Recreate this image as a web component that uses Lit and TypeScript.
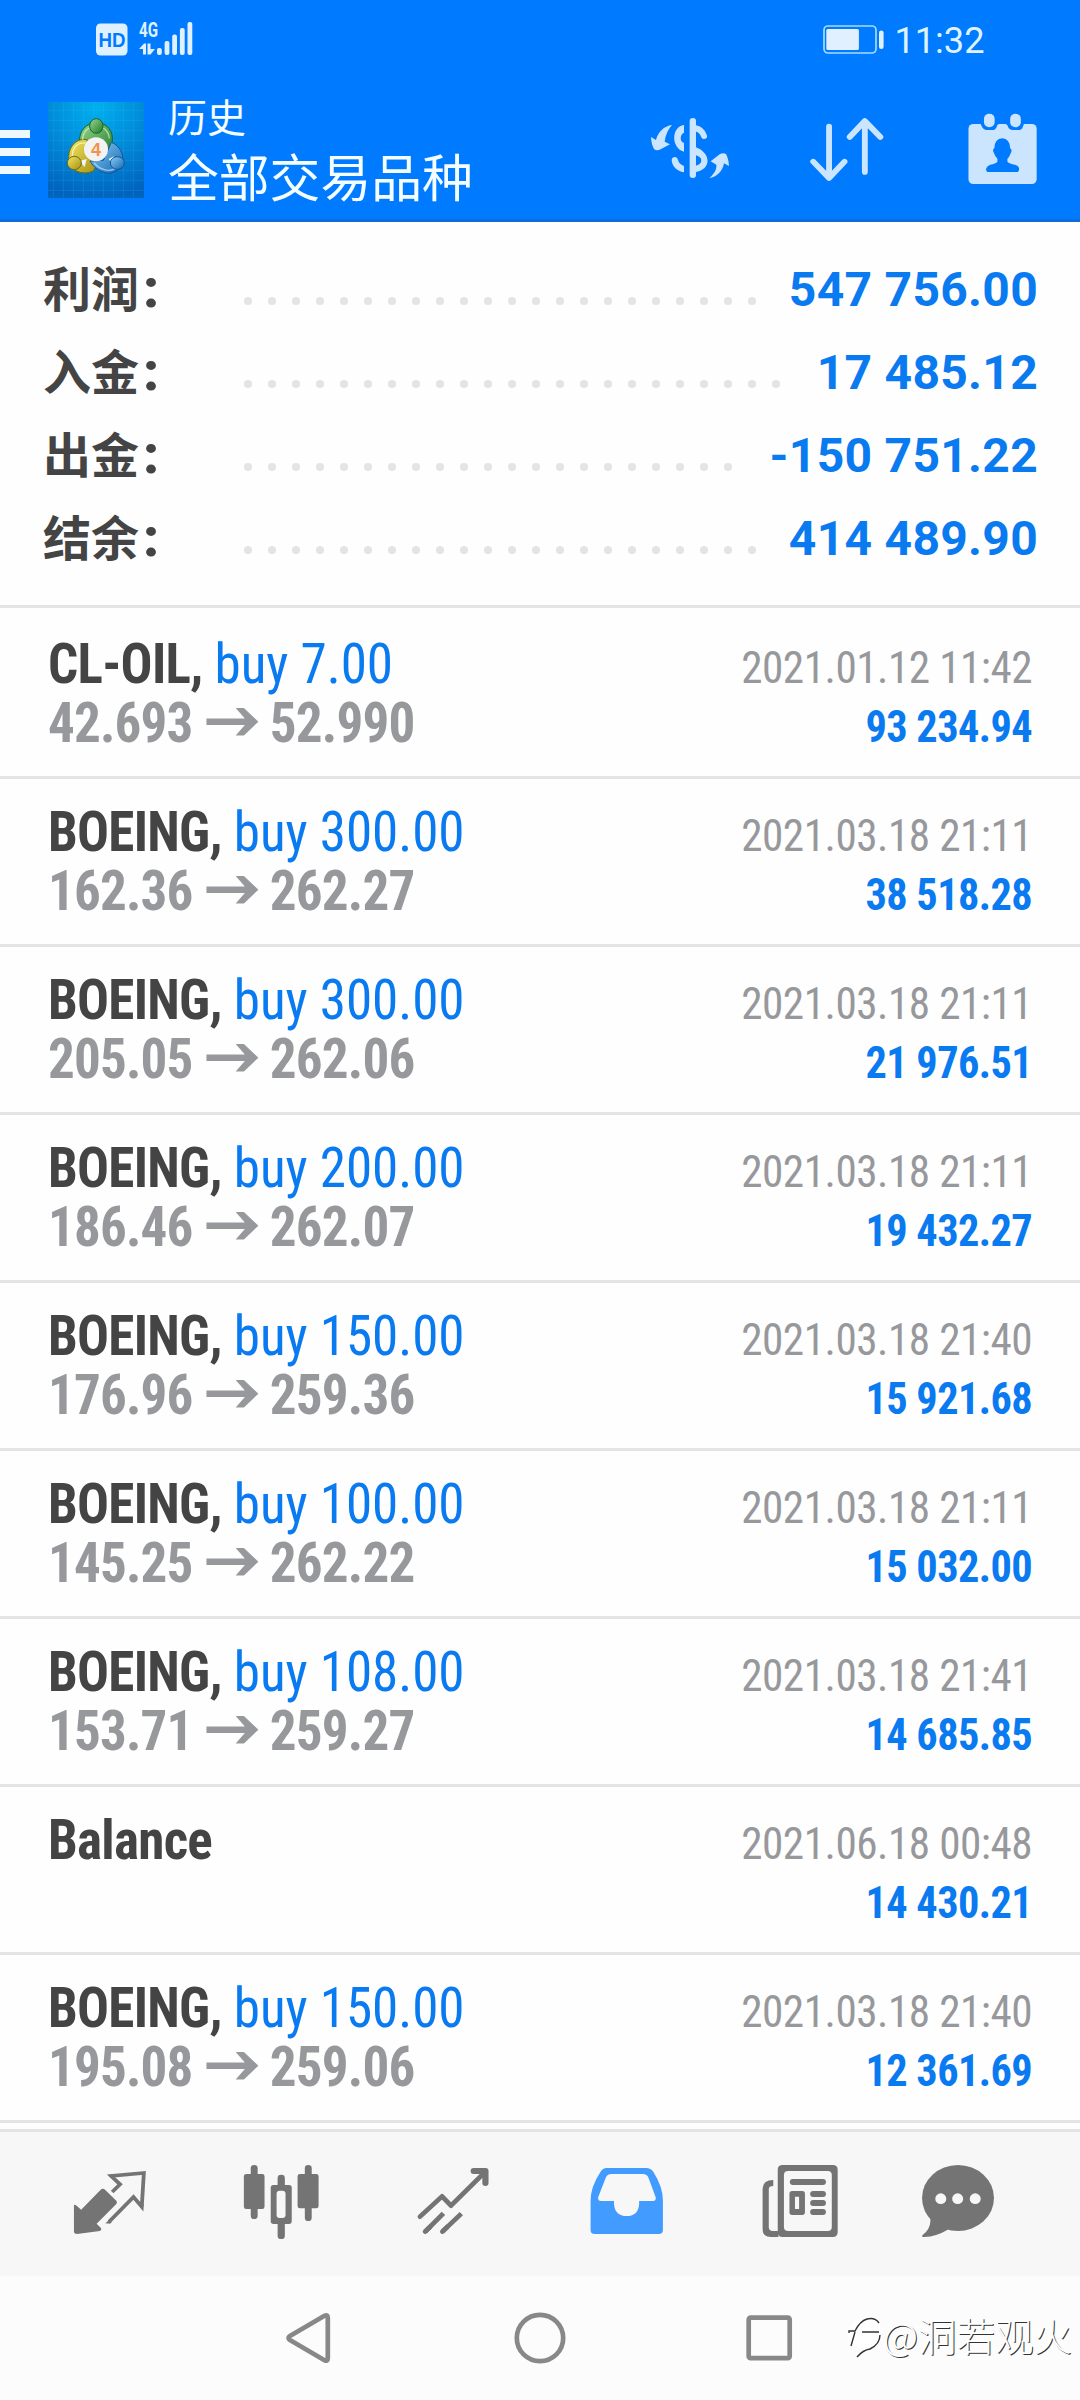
import { LitElement, html, css, svg, nothing } from "lit";
import { customElement, property } from "lit/decorators.js";

interface Deal {
  symbol: string;
  volume?: string;
  open?: string;
  close?: string;
  time: string;
  profit: string;
}

const SUMMARY: [string, string][] = [
  ["利润", "547 756.00"],
  ["入金", "17 485.12"],
  ["出金", "-150 751.22"],
  ["结余", "414 489.90"],
];

const DEALS: Deal[] = [
  { symbol: "CL-OIL", volume: "7.00", open: "42.693", close: "52.990", time: "2021.01.12 11:42", profit: "93 234.94" },
  { symbol: "BOEING", volume: "300.00", open: "162.36", close: "262.27", time: "2021.03.18 21:11", profit: "38 518.28" },
  { symbol: "BOEING", volume: "300.00", open: "205.05", close: "262.06", time: "2021.03.18 21:11", profit: "21 976.51" },
  { symbol: "BOEING", volume: "200.00", open: "186.46", close: "262.07", time: "2021.03.18 21:11", profit: "19 432.27" },
  { symbol: "BOEING", volume: "150.00", open: "176.96", close: "259.36", time: "2021.03.18 21:40", profit: "15 921.68" },
  { symbol: "BOEING", volume: "100.00", open: "145.25", close: "262.22", time: "2021.03.18 21:11", profit: "15 032.00" },
  { symbol: "BOEING", volume: "108.00", open: "153.71", close: "259.27", time: "2021.03.18 21:41", profit: "14 685.85" },
  { symbol: "Balance", time: "2021.06.18 00:48", profit: "14 430.21" },
  { symbol: "BOEING", volume: "150.00", open: "195.08", close: "259.06", time: "2021.03.18 21:40", profit: "12 361.69" },
];

@customElement("status-bar")
class StatusBar extends LitElement {
  static styles = css`
    :host { display: flex; align-items: flex-start; height: 81px; padding: 0 95.5px 0 96px; box-sizing: border-box; justify-content: space-between; color: #dff3ff; font-family: Roboto, sans-serif; }
    .left, .right { display: flex; }
    .signal { display: block; }
    .time { font-size: 36.2px; line-height: 42px; margin-top: 20px; margin-left: 9.5px; }
    .mark { font: 700 20px "Liberation Sans", sans-serif; fill: #007aff; }
    .net { font: 700 20px Roboto, sans-serif; fill: #dff3ff; }
  `;
  render() {
    return html`
      <div class="left">
        <svg class="signal" width="100" height="81" viewBox="96 0 100 81" fill="#dff0ff">
          <rect x="96" y="23.5" width="31.5" height="32" rx="4.5" />
          <text class="mark" x="98.5" y="46.5" textLength="27" lengthAdjust="spacingAndGlyphs">HD</text>
          <text class="net" x="139" y="36.5" textLength="19" lengthAdjust="spacingAndGlyphs">4G</text>
          <path d="M139 49 L144 43.5 H146 V54.5 H143 V49Z M147.5 43.5 H150.5 V49 H155 L150.5 54.5 H147.5Z" />
          <rect x="157" y="48" width="4.8" height="7" rx="2" />
          <rect x="164.6" y="41" width="4.8" height="14" rx="2" />
          <rect x="172.2" y="34.5" width="4.8" height="20.5" rx="2" />
          <rect x="179.9" y="28" width="4.8" height="27" rx="2" />
          <rect x="187.5" y="22" width="4.8" height="33" rx="2" />
        </svg>
      </div>
      <div class="right">
        <svg class="signal" width="62" height="81" viewBox="824 0 62 81" fill="#e0f0ff">
          <rect x="825" y="26" width="52" height="27" rx="4" fill="none" stroke="#a5dcff" stroke-width="1.7" />
          <rect x="827.3" y="29" width="32.6" height="21" rx="1.5" />
          <rect x="880" y="30.5" width="4.6" height="18.5" rx="2.3" />
        </svg>
        <span class="time">11:32</span>
      </div>
    `;
  }
}

@customElement("tool-bar")
class ToolBar extends LitElement {
  static styles = css`
    :host { display: flex; align-items: center; height: 138px; padding-right: 39px; }
    svg { display: block; flex: none; }
    .logo { margin-left: 18px; margin-right: 24px; }
    .titles { flex: 1; color: #f4fdff; font-family: "Noto Sans CJK SC", sans-serif; margin-top: -5px; }
    .sub { font-size: 39px; line-height: 54px; }
    .main { font-size: 50.8px; line-height: 66px; }
    .actions { display: flex; align-items: center; gap: 75px; }
    .four { font: 700 54px "Liberation Sans", sans-serif; fill: #f0944a; }
  `;
  render() {
    const grid = [48, 78, 108, 138, 168, 198, 228, 258, 288];
    return html`
      <svg width="30" height="48" viewBox="0 0 30 48" fill="#f0f8ff">
        <path d="M0 4h30v8H0z M0 22h30v8H0z M0 40h30v8H0z" />
      </svg>
      <svg class="logo" width="96" height="96" viewBox="24 21 288 288">
        <defs>
          <radialGradient id="sky" cx="50%" cy="5%" r="95%">
            <stop offset="0" stop-color="#00b0ee" />
            <stop offset=".45" stop-color="#0090dc" />
            <stop offset="1" stop-color="#0064be" />
          </radialGradient>
          <linearGradient id="green" x1="0" y1="0" x2="1" y2="1"><stop offset="0" stop-color="#9ad890" /><stop offset="1" stop-color="#1d7a28" /></linearGradient>
          <linearGradient id="gold" x1="0" y1="0" x2="1" y2="1"><stop offset="0" stop-color="#f2e765" /><stop offset="1" stop-color="#a58f10" /></linearGradient>
          <linearGradient id="blue" x1="0" y1="0" x2="1" y2="1"><stop offset="0" stop-color="#8ccdf5" /><stop offset="1" stop-color="#1267b4" /></linearGradient>
        </defs>
        <rect x="24" y="21" width="288" height="288" fill="url(#sky)" />
        ${grid.map((g) => svg`<path d="M${g - 8} 21V309M24 ${g - 2}H312" stroke="#5fc0f0" stroke-opacity=".22" stroke-width="2" />`)}
        <g stroke-width="3" stroke-linejoin="round">
          <path d="M119 138 C117 108 138 84 169 83 C204 84 220 110 217 140 Q212 168 190 190 L168 140Z" fill="url(#green)" stroke="#17632a" />
          <path d="M142 134 C110 128 88 152 86 184 Q84 216 108 228 Q136 240 160 228 L176 200 L140 178Z" fill="url(#gold)" stroke="#736811" />
          <path d="M214 142 C240 152 252 178 249 206 Q238 232 206 235 C178 232 160 216 150 198 L190 196Z" fill="url(#blue)" stroke="#12549a" />
        </g>
        <path d="M128 134 C128 108 148 94 169 94 C190 94 206 108 208 130" fill="none" stroke="#d5f3cf" stroke-opacity=".7" stroke-width="4" />
        <path d="M136 144 C112 142 98 158 97 182" fill="none" stroke="#fffbc0" stroke-opacity=".8" stroke-width="4" />
        <path d="M162 204 Q182 226 208 226 Q226 224 236 214" fill="none" stroke="#c0e6ff" stroke-opacity=".7" stroke-width="4" />
        <path d="M118 198 L140 192 L134 216Z M206 192 L222 184 L216 206Z" fill="#f0f6f0" />
        <ellipse cx="169" cy="93" rx="20" ry="22" fill="url(#green)" stroke="#17632a" stroke-width="3" />
        <ellipse cx="103" cy="204" rx="21" ry="20" fill="url(#gold)" stroke="#736811" stroke-width="3" />
        <ellipse cx="232" cy="204" rx="21" ry="19" fill="url(#blue)" stroke="#12549a" stroke-width="3" />
        <circle cx="168" cy="163" r="36" fill="#f3f3f3" />
        <text class="four" x="168" y="183" text-anchor="middle">4</text>
      </svg>
      <div class="titles">
        <div class="sub">历史</div>
        <div class="main">全部交易品种</div>
      </div>
      <div class="actions">
        <svg width="82" height="70" viewBox="27 15 246 210" fill="#cbe5ff">
          <path d="M96 45 C72 48 54 66 48 90 L33 81 Q34 103 42 117 Q50 124 62 118 L90 103 L74 95 Q78 64 96 45Z" />
          <path d="M132 45 C93 50 93 115 132 125 V99 C119 95 119 73 132 68Z" />
          <path d="M95 150 C96 138 112 138 114 150 C116 160 124 165 132 168 V187 C110 183 96 168 95 150Z" />
          <rect x="149" y="24" width="19" height="180" rx="9" />
          <path d="M164 54 Q186 58 192 78" fill="none" stroke="#cbe5ff" stroke-width="18" stroke-linecap="round" />
          <path d="M166 111 C214 128 216 178 166 187 V167 C190 163 190 140 166 135Z" />
          <path d="M208 204 C226 188 230 176 229 164 L212 154 L240 132 Q250 127 258 132 Q266 146 267 168 L252 160 C248 184 230 202 208 204Z" />
        </svg>
        <svg width="82.6" height="70" viewBox="770 345 240 210" preserveAspectRatio="none" fill="none" stroke="#cbe5ff" stroke-width="17" stroke-linecap="round" stroke-linejoin="round">
          <path d="M837 380V533M791 485L837 534L882 485M941 516V364M897 411L941 363L986 411" />
        </svg>
        <svg width="77.5" height="80" viewBox="1230 330 225 240" preserveAspectRatio="none" fill="#cbe5ff">
          <rect x="1243" y="372" width="198" height="180" rx="14" />
          <path d="M1276 368 Q1280 374 1281 378 Q1286 390 1296 390 H1312 Q1322 390 1325 380 Q1326 373 1332 372 V360 H1276Z M1350 372 Q1356 373 1357 378 Q1360 390 1372 390 H1388 Q1398 390 1401 380 Q1402 373 1408 368 V360 H1350Z" fill="#007aff" />
          <rect x="1288" y="341" width="31" height="41" rx="15" />
          <rect x="1364" y="341" width="31" height="41" rx="15" />
          <path d="M1341 415 Q1363 416 1364 445 Q1371 449 1366 459 Q1361 473 1356 476 V485 Q1362 491 1378 494 Q1390 498 1390 506 Q1390 516 1383 516 H1301 Q1294 516 1294 506 Q1296 498 1306 494 Q1322 491 1327 485 V476 Q1320 470 1317 459 Q1311 449 1318 445 Q1319 416 1341 415Z" fill="#007aff" />
        </svg>
      </div>
    `;
  }
}

@customElement("summary-panel")
class SummaryPanel extends LitElement {
  static styles = css`
    :host { display: block; padding: 25px 42px 26px 43px; border-bottom: 3px solid #e4e4e4; font-family: Roboto, "Noto Sans CJK SC", sans-serif; font-weight: 700; font-size: 48px; }
    .row { display: flex; height: 83px; align-items: center; line-height: 83px; }
    .label { width: 193px; height: 83px; margin-top: -4px; color: #444; flex: none; font-family: "Noto Sans CJK SC", sans-serif; }
    .colon { font: 900 54px/1 Roboto, sans-serif; margin-left: 4px; }
    .leader { flex: 1; display: flex; flex-wrap: wrap; overflow: hidden; height: 8px; margin-top: 24px; min-width: 0; }
    .dot { width: 8px; height: 8px; margin: 0 8px 8px; border-radius: 50%; background: #e4e4e4; }
    .value { color: #0a7af0; margin-left: 18px; margin-top: 2px; white-space: pre; letter-spacing: .3px; }
  `;
  render() {
    return SUMMARY.map(
      ([label, value]) => html`<div class="row">
        <span class="label">${label}<span class="colon">:</span></span>
        <span class="leader">${Array.from({ length: 26 }, () => html`<i class="dot"></i>`)}</span>
        <span class="value">${value}</span>
      </div>`
    );
  }
}

@customElement("deal-row")
class DealRow extends LitElement {
  @property({ attribute: false }) deal!: Deal;
  static styles = css`
    :host { display: flex; justify-content: space-between; height: 168px; box-sizing: border-box; padding: 23.5px 48px 0 48px; border-bottom: 3px solid #e4e4e4; font-family: "Roboto Condensed", Roboto, sans-serif; font-stretch: 75%; }
    span { white-space: pre; }
    .line { height: 59px; line-height: 59px; display: flex; align-items: baseline; white-space: pre; }
    .left .line { transform: scaleX(.965); transform-origin: 0 50%; }
    .right { padding-top: 3px; }
    .right .line { justify-content: flex-end; transform-origin: 100% 50%; }
    .title { font-size: 55px; }
    .symbol { color: #444; font-weight: 700; letter-spacing: -.75px; }
    .volume, .profit { color: #0a7af0; }
    .volume { letter-spacing: -.05px; }
    .prices { font-size: 55px; font-weight: 700; color: #97989c; letter-spacing: -.85px; }
    .arrow { display: block; margin: 0 12px 0 14px; }
    .when { transform: scaleX(.96); }
    .gain { transform: scaleX(.94); }
    .time { font-size: 45px; color: #97989c; letter-spacing: -.5px; }
    .profit { font-size: 45px; font-weight: 700; letter-spacing: -.6px; }
  `;
  render() {
    const d = this.deal;
    return html`
      <div class="left">
        <div class="line title"><span class="symbol">${d.symbol}${d.volume ? "," : ""}</span>${d.volume ? html`<span class="volume"> buy ${d.volume}</span>` : nothing}</div>
        ${d.open
          ? html`<div class="line prices"><span>${d.open}</span><svg class="arrow" width="54" height="34" viewBox="0 0 54 34" fill="#97989c"><path d="M0 10.5H40L30.5 0H39L54 13.7L39 27.4H30.5L40 17H0Z" /></svg><span>${d.close}</span></div>`
          : nothing}
      </div>
      <div class="right">
        <div class="line when"><span class="time">${d.time}</span></div>
        <div class="line gain"><span class="profit">${d.profit}</span></div>
      </div>
    `;
  }
}

@customElement("tab-bar")
class TabBar extends LitElement {
  static styles = css`
    :host { display: flex; height: 147px; box-sizing: border-box; padding-left: 24.1px; background: #f7f7f7; border-top: 3px solid #e4e4e4; }
    .tab { display: block; flex: none; width: 172.19px; height: 144px; fill: #747474; }
    .line { fill: none; stroke: #747474; }
    .active { fill: #429cff; }
  `;
  render() {
    return html`
      <svg class="tab" viewBox="70 126 500 432" preserveAspectRatio="none">
        <path d="M215 346 Q217 343 221 346 L236 359 L292 300 Q299 293 306 300 L338 332 Q342 337 338 342 L281 401 L294 415 Q296 421 290 423 L224 432 Q215 432 215 424Z" />
        <path class="line" stroke-width="11" d="M326 306 L349 283 L323 258 L418 249 L412 350 L388 321 L317 395" stroke-linejoin="miter" />
        <path d="M318 254 Q317 264 326 264 V253Z M405 342 L406 348 Q411 355 417 350 V342Z M306 400 L315 392 L325 396 L320 401Z" />
      </svg>
      <svg class="tab" viewBox="570 126 500 432" preserveAspectRatio="none">
        <rect x="709" y="252" width="60" height="105" rx="7" /><rect x="729" y="225" width="20" height="162" rx="10" />
        <rect x="865" y="252" width="61" height="103" rx="7" /><rect x="886" y="225" width="20" height="168" rx="10" />
        <rect x="807" y="254" width="21" height="40" rx="10" /><rect x="807" y="395" width="21" height="52" rx="10" />
        <path fill-rule="evenodd" d="M795 285H840Q848 285 848 293V394Q848 402 840 402H795Q787 402 787 394V293Q787 285 795 285Z M813 302Q804 302 804 311V375Q804 384 813 384H821Q830 384 830 375V311Q830 302 821 302Z" />
      </svg>
      <svg class="tab" viewBox="1070 126 500 432" preserveAspectRatio="none">
        <path class="line" stroke-width="14" stroke-linecap="round" stroke-linejoin="round" d="M1221 380L1285 319L1311 347L1408 248M1236 425L1250 411M1286 425L1300 411" />
        <path class="line" stroke-width="14" d="M1236 425L1289 370M1286 425L1341 371" />
        <path class="line" stroke-width="18" stroke-linecap="round" stroke-linejoin="round" d="M1377 243H1411V279" />
      </svg>
      <svg class="tab active" viewBox="2 126 500 432" preserveAspectRatio="none">
        <path fill-rule="evenodd" d="M175 245 Q182 234 192 234 H308 Q320 234 328 245 Q356 290 356 332 V420 Q356 432 344 432 H158 Q146 432 146 420 V332 Q146 290 175 245Z M206 252 Q195 252 190 263 L168 322 Q166 333 177 333 H214 V341 Q216 378 251 378 Q285 378 287 341 V333 H327 Q337 333 335 322 L314 263 Q310 252 298 252Z" />
      </svg>
      <svg class="tab" viewBox="502 126 500 432" preserveAspectRatio="none">
        <path fill-rule="evenodd" d="M704 225H850Q864 225 864 239V427Q864 441 850 441H704Q690 441 690 427V239Q690 225 704 225Z M720 243Q708 243 708 255V411Q708 423 720 423H835Q847 423 847 411V255Q847 243 835 243Z" />
        <path d="M677 270V288Q664 288 664 297V412Q664 423 676 423H692V441H670Q646 441 646 417V298Q646 270 677 270Z" />
        <rect x="725" y="267" width="105" height="18" rx="9" />
        <path fill-rule="evenodd" d="M732 303H761Q769 303 769 311V367Q769 375 761 375H732Q724 375 724 367V311Q724 303 732 303Z M740 320V357H752V320Z" />
        <rect x="784" y="303" width="46" height="18" rx="9" /><rect x="784" y="330" width="46" height="18" rx="9" /><rect x="784" y="357" width="46" height="18" rx="9" />
      </svg>
      <svg class="tab" viewBox="1002 126 500 432" preserveAspectRatio="none">
        <ellipse cx="1214" cy="324" rx="104.5" ry="99" />
        <path d="M1118 364Q1136 385 1134 392Q1133 418 1112 434Q1106 441 1116 441Q1152 439 1184 419L1200 400Z" />
        <g fill="#f7f7f7"><circle cx="1164" cy="326" r="16" /><circle cx="1213" cy="326" r="16" /><circle cx="1264" cy="326" r="16" /></g>
      </svg>
    `;
  }
}

@customElement("system-nav")
class SystemNav extends LitElement {
  static styles = css`
    :host { display: flex; justify-content: center; position: relative; height: 124px; background: #fcfcfc; }
    .key { display: block; fill: none; stroke: #888; stroke-width: 4.7; stroke-linejoin: round; }
    .mark { position: absolute; right: 8px; top: 34px; display: flex; align-items: center; color: #fff; font: 300 38.5px/56px "Noto Sans CJK SC", sans-serif; text-shadow: 1px 1px 0 #333; white-space: nowrap; }
    .word { margin-top: -4px; }
    .glyph { display: block; margin-right: -1px; }
  `;
  render() {
    return html`
      <svg class="key" width="230" height="124"><path d="M94.5 60.3L129.5 39.8Q132.8 38 132.8 42V82Q132.8 86 129.5 84.2L94.5 63.7Q92.5 62 94.5 60.3Z" /></svg>
      <svg class="key" width="230" height="124"><circle cx="115" cy="62" r="23.2" /></svg>
      <svg class="key" width="230" height="124"><rect x="93.7" y="41.6" width="41" height="40.6" rx="2" /></svg>
      <div class="mark">
        <svg class="glyph" width="36" height="46" viewBox="0 0 36 46" fill="none">
          <ellipse cx="17" cy="20" rx="17" ry="15" fill="#fff" />
          <path d="M1 20V18H7Q12 8 19 6Q27 4 31 10M14 19H31M32 22Q32 31 22 36Q15 37 9 44M7 19L3 33" stroke="#333" stroke-width="1.4" />
        </svg>
        <span class="word">@洞若观火</span>
      </div>
    `;
  }
}

@customElement("app-root")
class AppRoot extends LitElement {
  static styles = css`
    :host { display: flex; flex-direction: column; width: 1080px; height: 2400px; overflow: hidden; background: #fefefe; }
    .header { background: #007aff; border-bottom: 3px solid #116bd6; }
    .list { padding-top: 3px; padding-bottom: 6px; }
  `;
  render() {
    return html`
      <div class="header"><status-bar></status-bar><tool-bar></tool-bar></div>
      <summary-panel></summary-panel>
      <div class="list">${DEALS.map((d) => html`<deal-row .deal=${d}></deal-row>`)}</div>
      <tab-bar></tab-bar>
      <system-nav></system-nav>
    `;
  }
}
